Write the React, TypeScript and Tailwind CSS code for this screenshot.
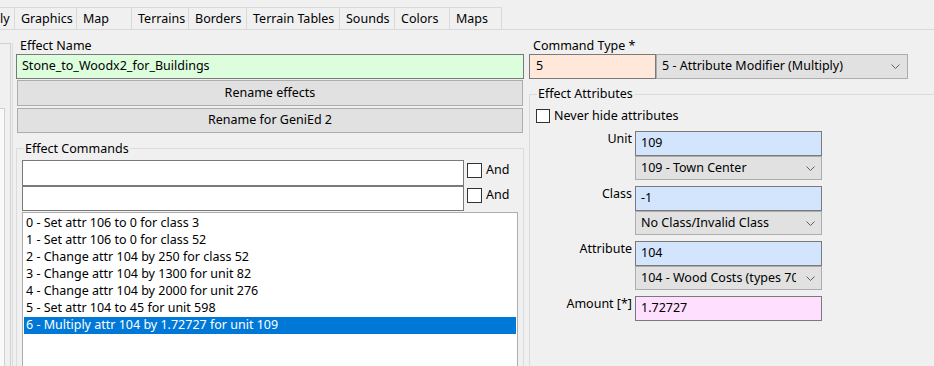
const tabs = [
  { label: "ly", w: "w-[15px]", first: true },
  { label: "Graphics", w: "w-[62px]" },
  { label: "Map", w: "w-[55px]" },
  { label: "Terrains", w: "w-[57px]" },
  { label: "Borders", w: "w-[58px]" },
  { label: "Terrain Tables", w: "w-[93px]" },
  { label: "Sounds", w: "w-[55px]" },
  { label: "Colors", w: "w-[55px]" },
  { label: "Maps", w: "w-[52px]" },
];

const commands = [
  "0 - Set attr 106 to 0 for class 3",
  "1 - Set attr 106 to 0 for class 52",
  "2 - Change attr 104 by 250 for class 52",
  "3 - Change attr 104 by 1300 for unit 82",
  "4 - Change attr 104 by 2000 for unit 276",
  "5 - Set attr 104 to 45 for unit 598",
  "6 - Multiply attr 104 by 1.72727 for unit 109",
];

const attributes = [
  { label: "Unit", value: "109", option: "109 - Town Center" },
  { label: "Class", value: "-1", option: "No Class/Invalid Class" },
  { label: "Attribute", value: "104", option: "104 - Wood Costs (types 70-3)" },
];

const Chevron = () => (
  <svg width="9" height="5" viewBox="0 0 9 5" className="shrink-0">
    <path d="M0.5 0.5 L4.5 4.5 L8.5 0.5" fill="none" stroke="#606060" strokeWidth="1" />
  </svg>
);

const Combo = ({ text, className }: { text: string; className?: string }) => (
  <div
    className={`flex h-full items-center border border-[#adadad] bg-[#e1e1e1] pl-[5px] pr-[6px] ${className ?? ""}`}
  >
    <span className="min-w-0 flex-1 overflow-hidden whitespace-nowrap">{text}</span>
    <span className="ml-[10px] flex">
      <Chevron />
    </span>
  </div>
);

const Check = ({ label, size = "w-[15px] h-[15px]" }: { label: string; size?: string }) => (
  <div className="flex items-center">
    <div className={`${size} shrink-0 border border-[#333333] bg-white`} />
    <span className="ml-[4px] whitespace-nowrap leading-[16px]">{label}</span>
  </div>
);

export default function App() {
  return (
    <div className="h-[366px] w-[934px] overflow-hidden bg-[#f0f0f0] font-['Noto_Sans',sans-serif] text-[12.5px] text-black">
      {/* Tab strip */}
      <div className="pt-[7px]">
        <div className="flex h-[23px] border-b border-[#d9d9d9]">
          {tabs.map((t) => (
            <div
              key={t.label}
              className={`${t.w} flex items-center overflow-hidden border-t border-r border-[#d9d9d9] pt-[1px] ${t.first ? "pl-0" : "pl-[6px]"} whitespace-nowrap`}
            >
              {t.label}
            </div>
          ))}
        </div>
      </div>

      <div className="flex">
        {/* Left sash */}
        <div className="w-[16px] shrink-0 pt-[13px]">
          <div className="h-[340px] w-[13px] border-r border-[#dcdcdc]">
            <div className="h-full w-[11px] border-t border-r border-[#d0d0d0] pt-[64px]">
              <div className="h-full w-[5px] border-t border-r border-[#d0d0d0] bg-[#f9f9f9]" />
            </div>
          </div>
        </div>

        {/* Left column */}
        <div className="w-[508px] shrink-0 pt-[8px]">
          <div className="h-[16px] pl-[4px] leading-[16px]">Effect Name</div>
          <div className="flex h-[25px] items-center border border-[#7a7a7a] bg-[#dcfedc] pl-[5px]">
            Stone_to_Woodx2_for_Buildings
          </div>
          <button className="mx-[1px] mt-[1px] flex h-[26px] w-[506px] items-center justify-center border border-[#adadad] bg-[#e1e1e1] pt-[1px]">
            Rename effects
          </button>
          <button className="mx-[1px] mt-[2px] flex h-[25px] w-[506px] items-center justify-center border border-[#adadad] bg-[#e1e1e1]">
            Rename for GeniEd 2
          </button>

          <fieldset className="mt-[7px] h-[240px] w-[508px] border border-[#dcdcdc] pl-[5px] pr-[5px]">
            <legend className="ml-[2px] px-[1px] leading-[17px]">Effect Commands</legend>
            <div className="mt-[3px] flex h-[26px] items-start">
              <div className="h-[26px] w-[442px] border border-[#7a7a7a] bg-white" />
              <div className="ml-[3px] mt-[2px]">
                <Check label="And" />
              </div>
            </div>
            <div className="flex h-[25px] items-start">
              <div className="h-[25px] w-[442px] border border-[#7a7a7a] bg-white" />
              <div className="ml-[3px] mt-[1px]">
                <Check label="And" />
              </div>
            </div>
            <div className="mt-[1px] h-[200px] border border-[#adadad] bg-white px-[1px] pt-[2px]">
              {commands.map((c, i) => (
                <div
                  key={c}
                  className={`flex h-[17px] items-center pl-[2px] whitespace-nowrap ${
                    i === 6 ? "bg-[#0078d7] text-white" : ""
                  }`}
                >
                  {c}
                </div>
              ))}
            </div>
          </fieldset>
        </div>

        {/* Right column */}
        <div className="ml-[5px] w-[420px] shrink-0 pt-[8px]">
          <div className="h-[16px] pl-[4px] leading-[16px]">Command Type *</div>
          <div className="flex h-[25px]">
            <div className="flex w-[127px] items-center border border-[#7a7a7a] bg-[#ffe8d9] pl-[6px]">5</div>
            <Combo text="5 - Attribute Modifier (Multiply)" className="w-[252px] pr-[7px]" />
          </div>

          <fieldset className="mt-[7px] h-[300px] w-[430px] border border-[#dcdcdc] pl-[6px]">
            <legend className="ml-[1px] px-[1px] leading-[16px]">Effect Attributes</legend>
            <div className="mt-[6px]">
              <Check label="Never hide attributes" size="w-[14px] h-[14px]" />
            </div>
            <div className="-ml-[6px] mt-[7px] grid grid-cols-[102px_187px] gap-x-[3px]">
              {attributes.map((a) => (
                <div key={a.label} className="contents">
                  <div className="text-right leading-[16px] whitespace-nowrap">{a.label}</div>
                  <div className="mb-[6px]">
                    <div className="flex h-[25px] items-center border border-[#7a7a7a] bg-[#d3e5fd] pl-[5px]">
                      {a.value}
                    </div>
                    <div className="h-[24px]">
                      <Combo text={a.option} />
                    </div>
                  </div>
                </div>
              ))}
              <div className="text-right leading-[16px] whitespace-nowrap">Amount [*]</div>
              <div className="flex h-[25px] items-center border border-[#7a7a7a] bg-[#fee0fe] pl-[5px]">
                1.72727
              </div>
            </div>
          </fieldset>
        </div>
      </div>
    </div>
  );
}
